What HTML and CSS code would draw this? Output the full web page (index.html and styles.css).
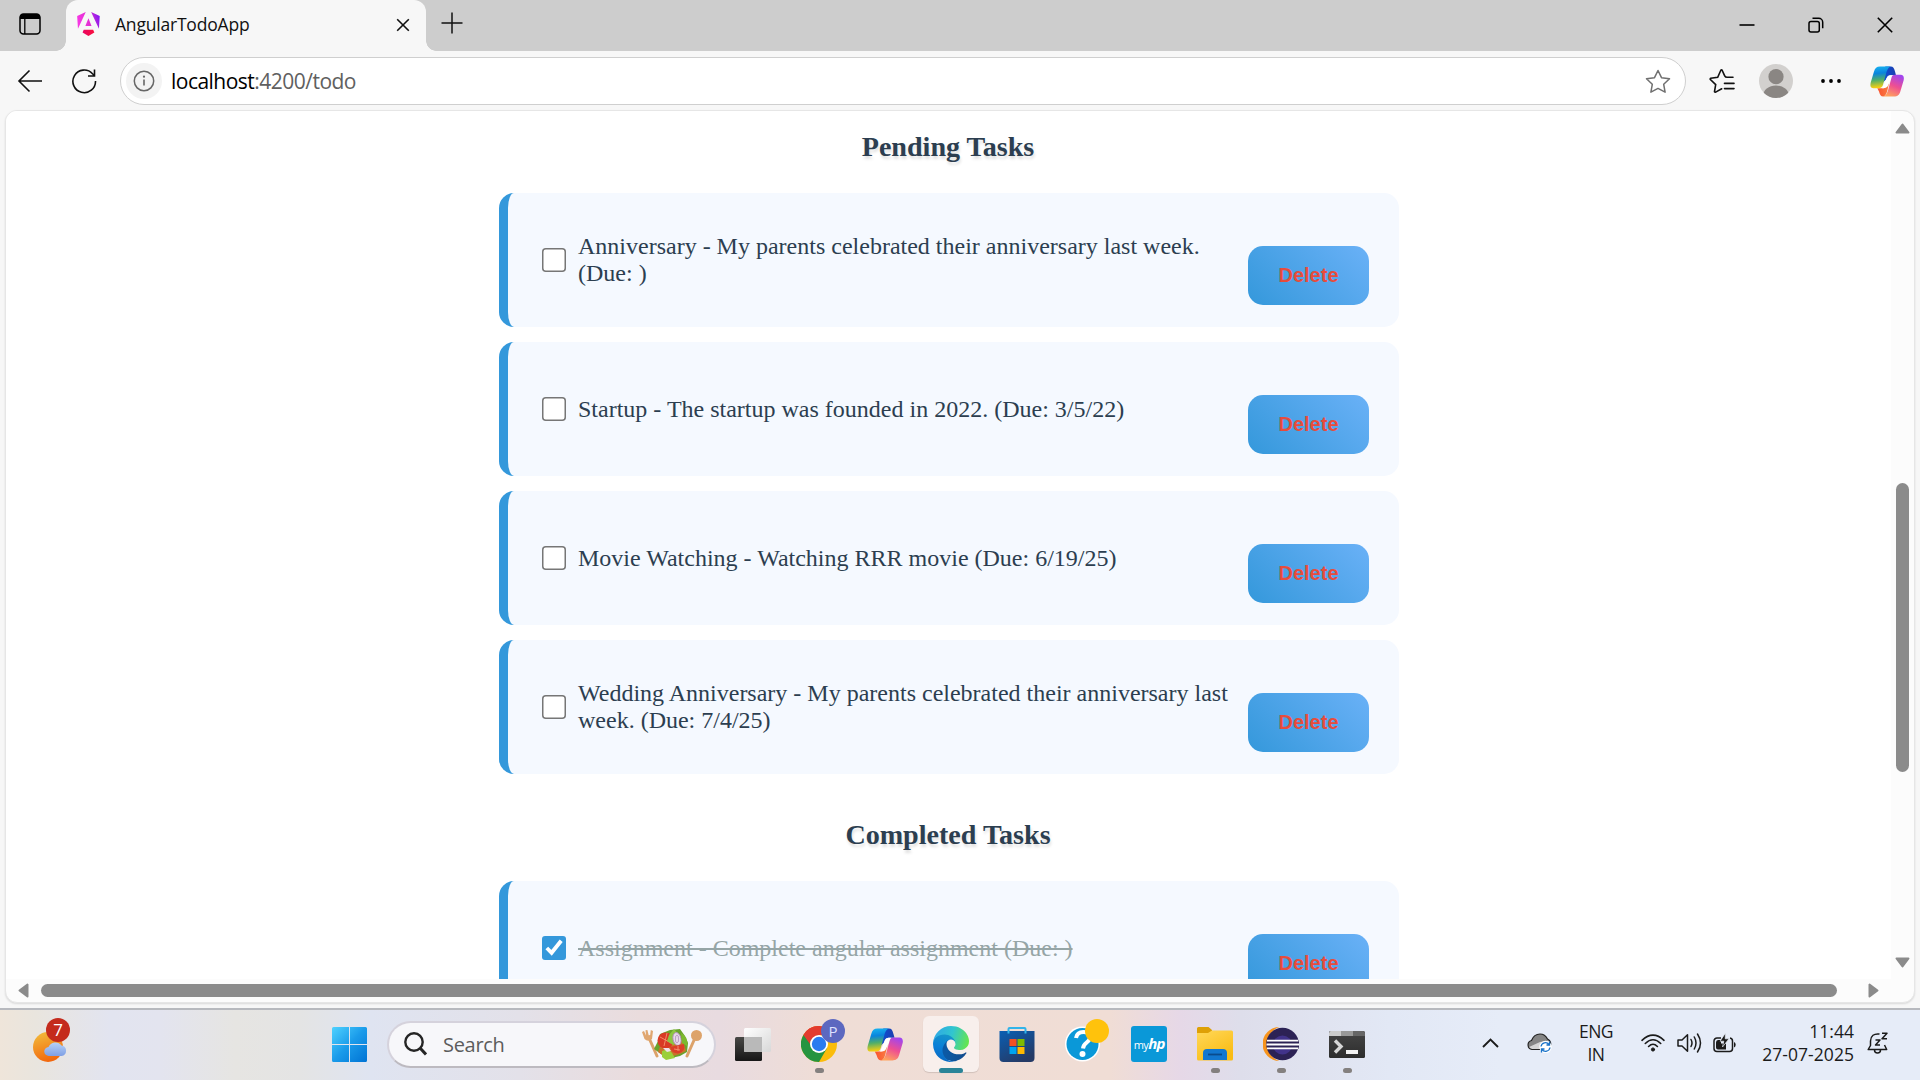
FILE: index.html
```html
<!DOCTYPE html>
<html lang="en">
<head>
<meta charset="utf-8">
<title>AngularTodoApp</title>
<link rel="stylesheet" href="styles.css">
</head>
<body>
<header class="tabstrip">
  <div class="workspaces">
    <svg width="22" height="22" viewBox="0 0 22 22"><rect x="1" y="1" width="20" height="20" rx="3.5" fill="none" stroke="#000" stroke-width="1.5"/><path d="M1 6V4a3 3 0 0 1 3-3h14a3 3 0 0 1 3 3v2z"/><path d="M5.8 6v15" stroke="#000" stroke-width="1.3"/></svg>
  </div>
  <div class="tab">
    <svg class="favicon" width="23" height="24" viewBox="0 0 223 236"><defs><linearGradient id="ang" x1="0" y1=".3" x2="1" y2=".1"><stop offset="0" stop-color="#f637e3"/><stop offset=".5" stop-color="#e02fd0"/><stop offset="1" stop-color="#7a14f5"/></linearGradient><linearGradient id="angb"><stop offset="0" stop-color="#e90464"/><stop offset="1" stop-color="#f9103c"/></linearGradient></defs><path fill="url(#ang)" d="m222.077 39.192-8.019 125.923L137.387 0l84.69 39.192ZM111.039 62.675l30.357 73.803H80.681l30.358-73.803ZM7.937 165.115 0 39.192 84.69 0 7.937 165.115Z"/><path fill="url(#angb)" d="m168.972 202.017-57.933 33.056-57.934-33.056 11.783-28.556h92.301z"/></svg>
    <span class="tab-title">AngularTodoApp</span>
    <svg class="tab-close" width="14" height="14" viewBox="0 0 14 14"><path d="M1.2 1.2l11.6 11.6M12.8 1.2L1.2 12.8" stroke="#111" stroke-width="1.6"/></svg>
  </div>
  <svg class="new-tab" width="22" height="22" viewBox="0 0 22 22"><path d="M11 .5v21M.5 11h21" stroke="#111" stroke-width="1.5"/></svg>
  <div class="window-controls">
    <svg width="16" height="16" viewBox="0 0 16 16"><path d="M.5 8h15" stroke="#000" stroke-width="1.6"/></svg>
    <svg width="16" height="16" viewBox="0 0 16 16" fill="none" stroke="#000" stroke-width="1.5"><rect x="1" y="4.5" width="10.3" height="10.5" rx="2"/><path d="M4.5 1.3h6.2a4 4 0 0 1 4 4v6"/></svg>
    <svg width="16" height="16" viewBox="0 0 16 16"><path d="M.8.8l14.4 14.4M15.2.8L.8 15.2" stroke="#000" stroke-width="1.6"/></svg>
  </div>
</header>

<nav class="toolbar">
  <svg class="back" width="26" height="24" viewBox="0 0 26 24" fill="none" stroke="#111" stroke-width="1.6"><path d="M12.5 1.5L2 12l10.5 10.5M2 12h23"/></svg>
  <svg class="reload" width="26" height="26" viewBox="0 0 26 26" fill="none" stroke="#111" stroke-width="1.6"><path d="M24.500 13A11.300 11.300 0 1 1 21.500 5.700L23.300 7.500M23.500 1.500V8H17"/></svg>
  <div class="address">
    <span class="site-info"><svg width="22" height="22" viewBox="0 0 22 22"><circle cx="11" cy="11" r="9.7" fill="none" stroke="#666" stroke-width="1.5"/><path d="M11 9.500v6" stroke="#666" stroke-width="1.600"/><circle cx="11" cy="6.700" r="1.100" fill="#666"/></svg></span>
    <span class="url"><b>localhost</b>:4200/todo</span>
    <svg class="star" width="26" height="25" viewBox="0 0 26 25"><path d="M13 1.500l3.500 7.200 8 1.100-5.800 5.500 1.400 7.900-7.100-3.800-7.100 3.800 1.400-7.900L1.500 9.800l8-1.100z" fill="none" stroke="#707070" stroke-width="1.500" stroke-linejoin="round"/></svg>
  </div>
  <svg class="favorites" width="26" height="25" viewBox="0 0 26 25"><path d="M24 8.700h-5.500q-2 .2-2.800-1.500L13.200 1.700q-.7-.9-1.400 0L8.700 8.700l-7 1q-.9.400-.3 1.300l5.300 5-1.200 6.900q.2 1 1.200.6l6-3.300M15.500 14.800H25M15.500 20H25" transform="translate(0 -.4)" fill="none" stroke="#111" stroke-width="1.600" stroke-linecap="round"/></svg>
  <svg class="profile" width="34" height="34" viewBox="0 0 34 34"><defs><clipPath id="pc"><circle cx="17" cy="17" r="17"/></clipPath></defs><g clip-path="url(#pc)"><path fill="#d2d0ce" d="M0 0h34v34H0z"/><circle cx="17" cy="12.700" r="7.600" fill="#8a8683"/><ellipse cx="17" cy="32" rx="13" ry="10.500" fill="#8a8683"/></g></svg>
  <svg class="more" width="20" height="4" viewBox="0 0 20 4"><circle cx="2" cy="2" r="1.900"/><circle cx="10" cy="2" r="1.900"/><circle cx="18" cy="2" r="1.900"/></svg>
  <svg class="copilot" width="34" height="31" viewBox="0 0 102 92">
    <defs>
      <linearGradient id="cpA" x2=".1" y2="1"><stop offset="0" stop-color="#18b6f2"/><stop offset=".35" stop-color="#0a84dc"/><stop offset=".65" stop-color="#4fae6a"/><stop offset="1" stop-color="#f8cf10"/></linearGradient>
      <linearGradient id="cpB"><stop offset="0" stop-color="#0a50d8"/><stop offset="1" stop-color="#1e3fae"/></linearGradient>
      <linearGradient id="cpC" x1=".7" y1="0" x2=".3" y2="1"><stop offset="0" stop-color="#a145ee"/><stop offset=".5" stop-color="#ee4f92"/><stop offset="1" stop-color="#ffa35c"/></linearGradient>
      <linearGradient id="cpD" x2="1"><stop offset="0" stop-color="#f9522f"/><stop offset="1" stop-color="#fb8044"/></linearGradient>
      <g id="cp"><path fill="url(#cpD)" d="M22 66h16c8 0 12-4 15-12l6-14c-4 20-8 51-19 51-8 0-10-5-13-15z"/><path fill="url(#cpB)" d="M46 1h16c8 0 10 5 13 15l3 11H64c-10 0-13 4-16 13L38 50z"/><path fill="#fff" d="M50 36q3-9 12-9h7L55 56q-3 10-14 10h-4z"/><path fill="url(#cpA)" d="M30 1h32c-8 3-11 11-14 22l-9 33c-2 7-6 10-14 10H10C2 66 0 60 2 50l10-34C15 6 20 1 30 1z"/><path fill="url(#cpC)" d="M76 26h16c8 0 11 6 9 16L91 76c-3 11-9 15-19 15H40c8-3 12-11 15-22l9-33c2-7 4-10 12-10z"/></g>
    </defs>
    <use href="#cp"/></svg>
</nav>

<div class="viewport">
  <main class="page">
    <div class="content">
      <h3>Pending Tasks</h3>
      <ul class="tasks">
        <li class="task"><input type="checkbox"><span class="label">Anniversary - My parents celebrated their anniversary last week. (Due: )</span><button>Delete</button></li>
        <li class="task"><input type="checkbox"><span class="label">Startup - The startup was founded in 2022. (Due: 3/5/22)</span><button>Delete</button></li>
        <li class="task"><input type="checkbox"><span class="label">Movie Watching - Watching RRR movie (Due: 6/19/25)</span><button>Delete</button></li>
        <li class="task"><input type="checkbox"><span class="label">Wedding Anniversary - My parents celebrated their anniversary last week. (Due: 7/4/25)</span><button>Delete</button></li>
      </ul>
      <h3>Completed Tasks</h3>
      <ul class="tasks">
        <li class="task done"><input type="checkbox" checked><span class="label">Assignment - Complete angular assignment (Due: )</span><button>Delete</button></li>
      </ul>
    </div>
  </main>
  <div class="vscroll">
    <svg width="15" height="11" viewBox="0 0 15 11"><path d="M7.500 1.500L13.500 9.500H1.500z" fill="#8b8b8b" stroke="#8b8b8b" stroke-width="2" stroke-linejoin="round"/></svg>
    <div class="vthumb"></div>
    <svg class="down" width="15" height="11" viewBox="0 0 15 11"><path d="M7.500 9.500L13.500 1.500H1.500z" fill="#8b8b8b" stroke="#8b8b8b" stroke-width="2" stroke-linejoin="round"/></svg>
  </div>
  <div class="hscroll">
    <svg width="11" height="15" viewBox="0 0 11 15"><path d="M1.500 7.500L9.500 1.500v12z" fill="#8b8b8b" stroke="#8b8b8b" stroke-width="2" stroke-linejoin="round"/></svg>
    <div class="hthumb"></div>
    <svg class="right" width="11" height="15" viewBox="0 0 11 15"><path d="M9.500 7.500L1.500 1.500v12z" fill="#8b8b8b" stroke="#8b8b8b" stroke-width="2" stroke-linejoin="round"/></svg>
  </div>
</div>

<footer class="taskbar">
  <div class="weather">
    <svg width="38" height="42" viewBox="0 0 38 42"><defs><linearGradient id="sun" x1=".3" y1="0" x2=".6" y2="1"><stop offset="0" stop-color="#f2b93a"/><stop offset="1" stop-color="#f2640c"/></linearGradient><linearGradient id="cl" x2="0" y2="1"><stop offset="0" stop-color="#b6d2f9"/><stop offset="1" stop-color="#7f9fe4"/></linearGradient></defs><circle cx="15" cy="26" r="15" fill="url(#sun)"/><path d="M16 35a4.500 4.500 0 0 1-.5-9 7.500 7.500 0 0 1 13-1.500A5.300 5.300 0 0 1 28.500 35z" fill="url(#cl)"/></svg>
    <span class="badge">7</span>
  </div>
  <div class="cell start"><svg width="35" height="35" viewBox="0 0 35 35"><defs><linearGradient id="win" gradientUnits="userSpaceOnUse" x1="0" y1="0" x2="35" y2="35"><stop offset="0" stop-color="#4fd2ff"/><stop offset=".5" stop-color="#1a9bea"/><stop offset="1" stop-color="#0073d4"/></linearGradient></defs><path fill="url(#win)" d="M1.500 0H17v17H0V1.500A1.500 1.500 0 0 1 1.500 0zM18 0h15.500A1.500 1.500 0 0 1 35 1.500V17H18zM0 18h17v17H1.500A1.500 1.500 0 0 1 0 33.500zM18 18h17v15.500a1.500 1.500 0 0 1-1.500 1.500H18z"/></svg></div>
  <div class="search">
    <svg width="23" height="24" viewBox="0 0 23 24" fill="none" stroke="#252525" stroke-width="2.400"><circle cx="10" cy="10" r="8.700"/><path d="M16 16l6 6.500" stroke-width="3"/></svg>
    <span>Search</span>
    <svg class="salad" width="60" height="31" viewBox="0 0 60 31">
      <g stroke="#dca26a" stroke-linecap="round"><path d="M7 9l8 18M53 9l-8 18" stroke-width="3"/></g>
      <path d="M0 3l2.500 7q3.500 3.500 7.500 0L11 2 8.800 1l-.6 5-1.500.3L5.400 1 3.500 1.300 4 6.500 2 2z" fill="#e0a771"/><circle cx="54.500" cy="6.500" r="5.500" fill="#dda36a"/>
      <path d="M12 20l4-8 2-7 10-4 10-1 5 7 3 7-1 9-7 4-13 3-6-5z" fill="#69a32b"/>
      <path d="M16 23q10 9 28-1l-3-10-20-3z" fill="#c9742a"/>
      <circle cx="23.500" cy="11.500" r="8" fill="#d93a25"/><path d="M18 8l11 6M25 4l-3 13" stroke="#f38b68" stroke-width="1"/>
      <path d="M27 6l5-6 5 6-1 8-5 2-6-4z" fill="#8cc63f"/><ellipse cx="35" cy="10" rx="4" ry="6.500" transform="rotate(-12 35 10)" fill="#e6dce8" stroke="#b48cbc" stroke-width=".9"/><ellipse cx="35" cy="10" rx="1.600" ry="4" fill="none" stroke="#b48cbc" stroke-width=".8"/>
      <path d="M28 18l14-3q2 8-6 9.500-6.500 0-8-6.500z" fill="#dc3f28"/><path d="M32 20l6 1M36 17v5" stroke="#f38b68"/>
      <path d="M20 22l6-2 4 4 3 5-9 2-4-3z" fill="#9bcf3a"/><path d="M39 4q8 4 6 13l-5-3z" fill="#7db82f"/><path d="M21 19l6 0 2 3-4 1z" fill="#f0dfea"/>
    </svg>
  </div>
  <div class="cell"><svg width="36" height="36" viewBox="0 0 36 36"><defs><linearGradient id="tv" x2="0" y2="1"><stop offset="0" stop-color="#484846"/><stop offset="1" stop-color="#161616"/></linearGradient><linearGradient id="tv2" x2="1" y2="1"><stop offset="0" stop-color="#fff"/><stop offset="1" stop-color="#d8d8d8"/></linearGradient></defs><rect x="0" y="11" width="27" height="24" rx="1.500" fill="url(#tv)"/><rect x="9" y="2" width="27" height="24" rx="1.500" fill="url(#tv2)"/><path d="M9 11h18v15H10.500A1.500 1.500 0 0 1 9 24.500z" fill="#b9b9b9"/></svg></div>
  <div class="cell running"><svg width="36" height="36" viewBox="0 0 36 36"><circle cx="18" cy="18" r="18" fill="#fbbc0b"/><path d="M18 18L2.400 9A18 18 0 0 1 33.600 9H18z" fill="#e33b2e"/><path d="M2.400 9A18 18 0 0 0 18 36l7.800-13.500L18 18z" fill="#25943f"/><path d="M2.400 9L10.200 22.500 18 18z" fill="#25943f"/><path d="M2.400 9A18 18 0 0 1 18 0l6 9h-6q-8 0-9 9z" fill="#e33b2e"/><circle cx="18" cy="18" r="9" fill="#fff"/><circle cx="18" cy="18" r="7.200" fill="#2a7bf0"/></svg><span class="badge profile-badge">P</span></div>
  <div class="cell"><svg width="36" height="33" viewBox="0 0 102 92"><use href="#cp"/></svg></div>
  <div class="cell running active"><svg width="36" height="36" viewBox="0 0 256 256"><defs><linearGradient id="e1" x1=".2" x2="1"><stop offset="0" stop-color="#0c59a4"/><stop offset="1" stop-color="#114a8b"/></linearGradient><linearGradient id="e2" x1=".5" y1="0" x2=".3" y2="1"><stop offset="0" stop-color="#1797c8"/><stop offset=".5" stop-color="#0a7fd8"/><stop offset="1" stop-color="#0a68c0"/></linearGradient><linearGradient id="e3" x1="0" y1=".4" x2="1" y2=".6"><stop offset="0" stop-color="#2fa8e6"/><stop offset=".5" stop-color="#31c5cf"/><stop offset="1" stop-color="#66e64c"/></linearGradient></defs><path fill="url(#e1)" d="M231 190.500c-3.400 1.800-6.900 3.400-10.500 4.700a101.500 101.500 0 0 1-35.900 6.500c-47.300 0-88.500-32.500-88.500-74.300 0-12.500 7-23.800 17.200-30.400-42.800 1.800-53.800 46.400-53.800 72.500 0 74 68.100 81.400 82.800 81.400 7.900 0 19.800-2.300 27-4.600l1.300-.4a128.300 128.300 0 0 0 66.600-52.800 4 4 0 0 0-5.200-5.600Z"/><path fill="url(#e2)" d="M105.700 241.400a79.200 79.200 0 0 1-22.700-21.300 80.700 80.700 0 0 1 29.500-120c3.200-1.500 8.500-4.100 15.600-4a32.400 32.400 0 0 1 25.700 13 31.900 31.900 0 0 1 6.300 18.700c0-.2 24.500-79.600-80-79.600-43.900 0-80 41.600-80 78.200a130.200 130.200 0 0 0 12.100 56 128 128 0 0 0 156.400 67 75.500 75.500 0 0 1-62.800-8Z"/><path fill="url(#e3)" d="M152.300 148.900c-.8 1-3.300 2.500-3.300 5.700 0 2.600 1.700 5.100 4.700 7.200 14.400 10 41.500 8.700 41.600 8.700 10.700 0 21.100-3 30.300-8.400A61.400 61.400 0 0 0 256 109.200c.3-22.500-8-37.300-11.300-43.900C223.500 23.900 177.700 0 128 0A128 128 0 0 0 0 126.200c.5-36.500 36.800-66 80-66 3.500 0 23.500.4 42 10.100 16.300 8.600 24.900 19 30.800 29.200 6.200 10.700 7.300 24.100 7.300 29.500 0 5.300-2.700 13.300-7.800 19.900Z"/></svg></div>
  <div class="cell"><svg width="36" height="36" viewBox="0 0 36 36"><defs><linearGradient id="st" x2=".6" y2="1"><stop offset="0" stop-color="#0a5fb4"/><stop offset="1" stop-color="#253a66"/></linearGradient></defs><path d="M9.500 6V3a1 1 0 0 1 1-1h15a1 1 0 0 1 1 1v4" fill="none" stroke="#31b4ea" stroke-width="2"/><path d="M.5 5h35v27a4 4 0 0 1-4 4h-27a4 4 0 0 1-4-4z" fill="url(#st)"/><path d="M9.500 7.500V5M26.500 7.500V5" stroke="#31b4ea" stroke-width="2"/><path fill="#f25022" d="M10.500 13h7v7h-7z"/><path fill="#7fba00" d="M18.500 13h7v7h-7z"/><path fill="#00a4ef" d="M10.500 21h7v7h-7z"/><path fill="#ffb900" d="M18.500 21h7v7h-7z"/></svg></div>
  <div class="cell"><svg width="36" height="36" viewBox="0 0 36 36"><circle cx="17.500" cy="18" r="17.500" fill="#fff"/><circle cx="17.500" cy="18" r="16" fill="#0a98d8"/><path d="M11 12q1-6 7.500-6 6.500 0 6.500 5.500c0 5-6.500 4.500-7 11" fill="none" stroke="#fff" stroke-width="4"/><circle cx="17.500" cy="28" r="3" fill="#fff"/></svg><span class="badge notice"></span></div>
  <div class="cell"><div class="myhp">my<i>hp</i></div></div>
  <div class="cell running"><svg width="36" height="34" viewBox="0 0 36 34"><defs><linearGradient id="fo" x2=".6" y2="1"><stop offset="0" stop-color="#ffd85a"/><stop offset="1" stop-color="#fabc14"/></linearGradient></defs><path d="M0 1.500A1.500 1.500 0 0 1 1.500 0h10L15 3v5H0z" fill="#dea006"/><path d="M0 6h11l4-2.500h19.500A1.500 1.500 0 0 1 36 5v27a1.500 1.500 0 0 1-1.500 1.500h-33A1.500 1.500 0 0 1 0 32z" fill="url(#fo)"/><path d="M6 33V26a4 4 0 0 1 4-4h16a4 4 0 0 1 4 4v7z" fill="#1277cf"/><path d="M11 27.500h14" stroke="#0a4b8c" stroke-width="1.800"/></svg></div>
  <div class="cell running"><svg width="36" height="34" viewBox="0 0 36 34"><path d="M16.500 0A17 17 0 0 0 16.500 34 18 18 0 0 1 16.500 0z" fill="#f7941e"/><circle cx="19.500" cy="17" r="16.300" fill="#2c2255"/><circle cx="19.500" cy="18" r="9.500" fill="#41338a"/><path d="M4 13h32v9H4z" fill="#2c2255"/><path d="M4 13.700h31.500M3.500 17.500H36M4 21.300h31.500" stroke="#fff" stroke-width="1.800"/></svg></div>
  <div class="cell running"><svg width="36" height="27" viewBox="0 0 36 27"><defs><linearGradient id="te" x2="0" y2="1"><stop offset="0" stop-color="#454545"/><stop offset="1" stop-color="#2d2d2d"/></linearGradient></defs><rect width="36" height="27" rx="1.500" fill="url(#te)"/><path d="M1.500 0H12v5H0V1.500z" fill="#ccc"/><path d="M12 0h12v5H12z" fill="#999"/><path d="M24 0h10.500L36 1.500V5H24z" fill="#666"/><path d="M6 9.500l6 6-6 6" fill="none" stroke="#d6d6d6" stroke-width="3.400"/><path d="M17 19h12v4H17z" fill="#f2f2f2"/></svg></div>
  <div class="tray">
    <svg class="chevron" width="17" height="10" viewBox="0 0 17 10"><path d="M1 9l7.500-7.500L16 9" fill="none" stroke="#1b1b1b" stroke-width="1.900"/></svg>
    <svg class="onedrive" width="25" height="20" viewBox="0 0 25 20"><defs><clipPath id="cloud"><path d="M5 16.500a4.600 4.600 0 0 1-.5-9Q7 1 13 1q5 0 7.500 5 4 2 3 6.500-1 4-5 4z"/></clipPath></defs><g clip-path="url(#cloud)"><path d="M0 0h25v20H0z" fill="#858585"/><path d="M0 15l13-6 12-2v13H0z" fill="#d5d5d5"/></g><path d="M5 16.500a4.600 4.600 0 0 1-.5-9Q7 1 13 1q5 0 7.500 5 4 2 3 6.500-1 4-5 4z" fill="none" stroke="#222" stroke-width="1.200"/><circle cx="18.500" cy="14" r="6.200" fill="#fff"/><path d="M14 13.500a4.500 4.500 0 0 1 8-2M23 14.500a4.500 4.500 0 0 1-8 2M22.500 8.500v3.500h-3M14.500 19.500V16h3" fill="none" stroke="#1a73c9" stroke-width="1.300"/></svg>
    <div class="lang"><span>ENG</span><span>IN</span></div>
    <svg class="wifi" width="24" height="18" viewBox="0 0 24 18" fill="none" stroke="#1b1b1b" stroke-width="1.600" stroke-linecap="round"><path d="M1 6.300Q12-4 23 6.300M4.300 9.500Q12 2 19.700 9.500M7.600 12.500Q12 8 16.400 12.500"/><circle cx="12" cy="15.500" r="1.600" fill="#1b1b1b" stroke-width="1"/></svg>
    <svg class="volume" width="25" height="20" viewBox="0 0 25 20" fill="none" stroke="#1b1b1b" stroke-width="1.500" stroke-linejoin="round" stroke-linecap="round"><path d="M1 7h4l5.500-5.200v16.400L5 13H1zM14 6.500q2 3.500 0 7M17.300 4q3.400 6 0 12M20.500 1q6 9 0 18"/></svg>
    <svg class="battery" width="23" height="20" viewBox="0 0 23 20"><path d="M8 5H4a3 3 0 0 0-3 3v7.500a3 3 0 0 0 3 3h12.500a3 3 0 0 0 3-3V8a3 3 0 0 0-2.500-3" fill="none" stroke="#1b1b1b" stroke-width="1.500"/><path d="M3 9.500Q3 7 5 7h3v3.500h5V16.500H5q-2 0-2-2z" fill="#1b1b1b"/><path d="M21 9q1.700.5 1.700 2.800t-1.700 2.800z" fill="#1b1b1b"/><path d="M12.500 0L7 8.200h3.800L9.500 14l6.500-8.200h-3.800z" fill="#1b1b1b" stroke="#e6ecf7" stroke-width=".7"/></svg>
    <div class="clock"><span>11:44</span><span>27-07-2025</span></div>
    <svg class="bell" width="22" height="22" viewBox="0 0 22 22" fill="none" stroke="#1b1b1b" stroke-width="1.500" stroke-linejoin="round"><path d="M12.500 2Q4 1 3.500 9v4.500L1.200 17.500h18.500L17.500 13M7.500 18q0 3 3 3t3-3M8.500 8h4.500l-4.500 5H13M15 1.200h5L15 6.800h5" /></svg>
  </div>
</footer>
</body>
</html>
```
FILE: styles.css
```css
* { box-sizing: border-box; }
svg { display: block; flex: none; }
body { margin: 0; width: 1920px; height: 1080px; overflow: hidden; display: flex; flex-direction: column; background: #f7f7f7; font-family: "Open Sans", "Noto Sans", sans-serif; color: #111; }

.tabstrip { height: 51px; flex: none; display: flex; background: #cdcdcd; align-items: stretch; }
.workspaces { width: 66px; padding: 13px 0 0 19px; }
.tab { position: relative; width: 360px; background: #f7f7f7; border-radius: 12px 12px 0 0; display: flex; align-items: center; padding: 0 16px 4px 11px; }
.tab::before, .tab::after { content: ""; position: absolute; bottom: 0; width: 10px; height: 10px; }
.tab::before { left: -10px; background: radial-gradient(circle at 0 0, #cdcdcd 9.500px, #f7f7f7 10px); }
.tab::after { right: -10px; background: radial-gradient(circle at 100% 0, #cdcdcd 9.500px, #f7f7f7 10px); }
.tab-title { margin-left: 15px; font-size: 17.500px; letter-spacing: -.2px; white-space: nowrap; }
.tab-close { margin-left: auto; margin-top: 3px; }
.new-tab { margin: 12px 0 0 15px; }
.window-controls { margin-left: auto; display: flex; gap: 53px; padding: 17px 27px 0 0; }

.toolbar { height: 60px; flex: none; display: flex; align-items: center; padding: 0 16px 0 17px; }
.reload { margin-left: 28px; }
.address { flex: none; margin-left: 23px; width: 1566px; height: 48px; background: #fff; border: 1.500px solid #cfcfcf; border-radius: 24px; display: flex; align-items: center; padding: 0 14px 0 5px; }
.site-info { width: 36px; height: 36px; border-radius: 50%; background: #f3f3f3; display: flex; align-items: center; justify-content: center; }
.url { margin-left: 9px; font-size: 21px; letter-spacing: -.52px; color: #606060; }
.url b { font-weight: 400; color: #000; }
.star { margin-left: auto; }
.favorites { margin-left: 23px; }
.profile { margin-left: 24px; }
.more { margin-left: 28px; }
.copilot { margin-left: auto; }

.viewport { flex: none; width: 1910px; height: 893px; margin: -1px 0 0 5px; background: #fcfcfc; border: 1px solid #e6e6e6; border-radius: 12px; overflow: hidden; display: grid; grid-template: 868px 23px / 1885px 23px; box-shadow: 0 1px 2px rgba(0,0,0,.12); }
.page { background: #fff; overflow: hidden; font-family: "Liberation Serif", serif; color: #2c3e50; }
.content { width: 900px; margin-left: 493px; }
h3 { margin: 0; text-align: center; font-size: 28.080px; line-height: 32px; text-shadow: 1px 3px 3px rgba(0,0,0,.12); padding: 20px 2px 30px 0; }
.tasks { margin: 0; padding: 0; list-style: none; display: flex; flex-direction: column; gap: 15px; }
.tasks + h3 { padding: 45px 2px 30px 0; }
.task { height: 134px; border-left: 9px solid #3498db; border-radius: 15px; background: #f5f9ff; display: flex; align-items: center; padding: 22px 30px 22px 34px; font-size: 24px; line-height: 27px; }
.task input { zoom: 1.5; width: 16px; height: 16px; margin: 0; accent-color: #3498db; flex: none; }
.label { flex: 1; margin-left: 12px; padding-right: 8px; }
.done .label { color: #95a5a6; text-decoration: line-through; }
.task button { flex: none; width: 121px; height: 59px; margin: 30px 0 0; border: 0; border-radius: 15px; background: linear-gradient(45deg, #3498db, #6ab1f7); color: #e74c3c; font: bold 20px/23px "Liberation Sans", sans-serif; }

.vscroll { display: flex; flex-direction: column; align-items: center; padding: 12px 0 11px; }
.vthumb { width: 13px; height: 289px; margin-top: 349px; border-radius: 7px; background: #8b8b8b; }
.down { margin-top: auto; }
.hscroll { grid-column: 1 / 3; display: flex; align-items: center; padding: 0 35px 0 12px; }
.hthumb { width: 1796px; height: 13px; margin-left: 12px; border-radius: 7px; background: #8b8b8b; }
.right { margin-left: auto; }

.taskbar { margin-top: auto; height: 72px; flex: none; display: flex; align-items: center; border-top: 2px solid #b7b9be; background: linear-gradient(90deg, #efe5da 0, #e9e5de 35px, #e2e4f0 110px, #e3e4ef 160px, #e6e5e2 235px, #e4e4e4 300px, #dfe4f1 370px, #e3e1e9 520px, #eadcdd 640px, #e8dbe0 720px, #efddd6 820px, #f0ddd5 1110px, #e6d8e7 1180px, #dedeeb 1240px, #e2e8f5 1390px, #e6ecf8 1500px, #e6ecf8 100%); }
.weather { position: relative; width: 66px; height: 42px; margin-left: 33px; margin-top: -6px; }
.badge { position: absolute; left: 13px; top: -3px; width: 24px; height: 24px; border-radius: 50%; background: #c42b1c; color: #fff; font-size: 17px; line-height: 24px; text-align: center; }
.cell { position: relative; width: 66px; height: 70px; flex: none; display: flex; align-items: center; justify-content: center; padding-bottom: 2px; }
.cell svg { position: relative; }
.start { margin-left: 217px; }
.search { width: 329px; height: 47px; margin: 0 4px 2px 5px; border: 2px solid #d5d2dc; border-bottom-color: #bdbac0; border-radius: 24px; background: #f7f7fa; display: flex; align-items: center; padding: 0 12px 0 15px; font-size: 20px; color: #5c5c5c; }
.search span { margin-left: 16px; letter-spacing: -.3px; }
.salad { margin-left: auto; }
.running::after { content: ""; position: absolute; left: 28.500px; bottom: 7px; width: 9px; height: 5px; border-radius: 3px; background: #84807f; }
.active::before { content: ""; position: absolute; left: 5px; top: 6px; width: 56px; height: 56px; border-radius: 6px; background: #f8efec; box-shadow: 0 1px 1px rgba(0,0,0,.13); }
.active::after { left: 21px; width: 24px; background: #2a8498; }
.profile-badge { left: 35px; top: 9px; background: #5c68c0; color: #dfe2ff; font-size: 15px; }
.notice { left: 35px; top: 9px; background: #ffc20c; }
.myhp { width: 36px; height: 36px; border-radius: 3px; background: #0a98d8; color: #fff; font-size: 11px; line-height: 34px; text-align: center; letter-spacing: -.5px; white-space: nowrap; }
.myhp i { font-weight: 700; font-size: 15px; letter-spacing: -1px; }
.tray { margin-left: auto; display: flex; align-items: center; padding: 0 31px 4px 0; color: #1b1b1b; font-size: 17.500px; line-height: 23px; }
.onedrive { margin-left: 28px; }
.lang, .clock { display: flex; flex-direction: column; letter-spacing: -.5px; }
.lang { width: 36px; margin-left: 26px; align-items: center; }
.wifi { margin-left: 27px; }
.volume { margin-left: 12px; }
.battery { margin-left: 11px; }
.clock { width: 94px; margin-left: 24px; align-items: flex-end; white-space: nowrap; letter-spacing: .05px; }
.bell { margin-left: 13px; }
```
